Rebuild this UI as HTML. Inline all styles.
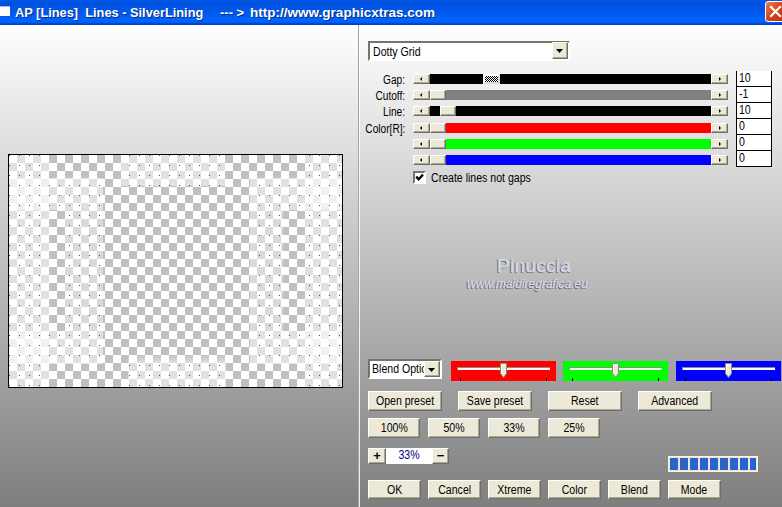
<!DOCTYPE html>
<html><head><meta charset="utf-8"><title>AP [Lines] Lines - SilverLining</title>
<style>
*{box-sizing:border-box;margin:0;padding:0}
html,body{width:782px;height:507px;overflow:hidden;background:#8a8a8a}
body{position:relative;font-family:"Liberation Sans",sans-serif;font-size:12px;color:#000;line-height:1}
.abs{position:absolute}
#title{left:0;top:0;width:782px;height:25px;background:linear-gradient(#0058ea 0,#0052de 13%,#0055e5 30%,#005af0 58%,#0066ff 80%,#0062fa 88%,#0046d4 95%,#003ac4 100%)}
#title .t{top:5.5px;color:#fff;font-weight:bold;font-size:13px;white-space:pre;text-shadow:1px 1px 0 #0a2a80}
#title .ic{left:0;top:6px;width:10px;height:10px;background:#fff;border-top:1px solid #9cc0f8}
#close{left:765px;top:1px;width:21px;height:21px;border:1px solid #fff;border-radius:3px;background:linear-gradient(135deg,#e8805c,#d2431c 50%,#b8300e)}
.pan{top:25px;height:482px;background:linear-gradient(#ffffff 0,#7e7e7e 100%)}
#left{left:0;width:358px}
#right{left:359px;width:423px}
#d1{left:358px;top:25px;width:1px;height:482px;background:#a6a49e}
#d2{left:359px;top:25px;width:1px;height:482px;background:rgba(255,255,250,.85)}
#prev{left:8px;top:154px;width:335px;height:234px;border:1px solid #000;background:#fff}
.n{display:inline-block;transform:scaleX(.88);transform-origin:0 50%;white-space:nowrap}
.lab{text-align:right;width:60px;left:345.5px;height:14px;font-size:12px}
.lab .n{transform-origin:100% 50%;transform:scaleX(.845)}
.btn{background:#ece9d8;border:1px solid;border-color:#fff #716f64 #716f64 #fff;box-shadow:inset -1px -1px 0 #aca899;text-align:center;font-size:12px}
.btn .n{transform-origin:50% 50%}
.sl{height:10px;left:413px;width:315px}
.ab{top:0;width:16px;height:10px;background:#ece9d8;border:1px solid;border-color:#fff #716f64 #716f64 #fff;box-shadow:inset -1px -1px 0 #aca899}
.th{top:0;width:16px;height:10px;background:#ece9d8;border:1px solid;border-color:#fff #716f64 #716f64 #fff;box-shadow:inset -1px -1px 0 #aca899}
.tri{position:absolute;top:1.75px;width:0;height:0;border:2.25px solid transparent}
.inp{left:736px;width:36px;height:16px;background:#fff;border:1px solid #000;border-top:0;font-size:12px;padding:1px 0 0 2px}
.sunk{background:#fff;border:2px solid;border-color:#77756b #fff #fff #77756b}
.sunk2{background:#fff;border:2px solid;border-color:#85837a #fff #fff #85837a}
</style></head><body>
<div id="title" class="abs"><div class="ic abs"></div><div class="t abs" style="left:15px;transform:scaleX(.985);transform-origin:0 0">AP [Lines]  Lines - SilverLining</div><div class="t abs" style="left:220px">--- &gt;</div><div class="t abs" style="left:250px;transform:scaleX(1.04);transform-origin:0 0">http://www.graphicxtras.com</div>
<div id="close" class="abs"><svg width="19" height="19" viewBox="0 0 19 19"><path d="M5 5 L14 14 M14 5 L5 14" stroke="#fff" stroke-width="2.2" stroke-linecap="square"/></svg></div></div>
<div id="left" class="abs pan"></div><div id="right" class="abs pan"></div><div id="d1" class="abs"></div><div id="d2" class="abs"></div>
<div id="prev" class="abs"><svg class="abs" style="left:0;top:0" width="333" height="232" viewBox="0 0 333 232" shape-rendering="crispEdges"><defs><pattern id="ck" width="16" height="16" patternUnits="userSpaceOnUse"><rect width="16" height="16" fill="#fff"/><rect x="8" width="8" height="8" fill="#c0c0c0"/><rect y="8" width="8" height="8" fill="#c0c0c0"/></pattern><pattern id="dt" width="10" height="10" patternUnits="userSpaceOnUse"><rect width="1" height="1" fill="#4a4a4a"/></pattern><clipPath id="cp"><rect x="0" y="0" width="40" height="232"/><rect x="296" y="0" width="37" height="232"/><rect x="0" y="23" width="94" height="32"/><rect x="241" y="23" width="92" height="32"/><rect x="112" y="0" width="104" height="31"/><rect x="56" y="55" width="38" height="121"/><rect x="241" y="55" width="33" height="121"/><rect x="0" y="176" width="94" height="33"/><rect x="241" y="176" width="92" height="33"/><rect x="119" y="207" width="98" height="25"/><rect x="119" y="205" width="98" height="2"/><rect x="119" y="203" width="98" height="2"/><rect x="119" y="201" width="98" height="2"/></clipPath></defs><rect width="333" height="232" fill="url(#ck)"/><rect x="0" y="0" width="40" height="232" fill="#fff" fill-opacity="0.50"/><rect x="296" y="0" width="37" height="232" fill="#fff" fill-opacity="0.50"/><rect x="0" y="23" width="94" height="32" fill="#fff" fill-opacity="0.50"/><rect x="241" y="23" width="92" height="32" fill="#fff" fill-opacity="0.50"/><rect x="112" y="0" width="104" height="31" fill="#fff" fill-opacity="0.50"/><rect x="56" y="55" width="38" height="121" fill="#fff" fill-opacity="0.42"/><rect x="241" y="55" width="33" height="121" fill="#fff" fill-opacity="0.42"/><rect x="0" y="176" width="94" height="33" fill="#fff" fill-opacity="0.50"/><rect x="241" y="176" width="92" height="33" fill="#fff" fill-opacity="0.50"/><rect x="119" y="207" width="98" height="25" fill="#fff" fill-opacity="0.50"/><rect x="119" y="205" width="98" height="2" fill="#fff" fill-opacity="0.38"/><rect x="119" y="203" width="98" height="2" fill="#fff" fill-opacity="0.25"/><rect x="119" y="201" width="98" height="2" fill="#fff" fill-opacity="0.12"/><rect width="333" height="232" fill="url(#dt)" clip-path="url(#cp)"/></svg></div>
<div class="abs sunk" style="left:368px;top:41px;width:202px;height:20px"><div class="abs" style="left:2.5px;top:3px"><span class="n">Dotty Grid</span></div><div class="abs btn" style="left:182px;top:-1px;width:16px;height:17px"><svg class="abs" style="left:3px;top:6px" width="7" height="4" viewBox="0 0 7 4"><path d="M0 0H7L3.5 4Z" fill="#000"/></svg></div></div>
<div class="abs lab" style="top:74px"><span class="n">Gap:</span></div>
<div class="abs sl" style="top:74px;background:#000"><div class="abs ab" style="left:0;width:17px"><div class="tri" style="left:5.5px;border-left-width:0;border-right:2.5px solid #000"></div></div><div class="abs" style="left:70px;top:0;width:17px;height:10px;border:2px solid;border-color:#fff #dedbca #dedbca #fff;background:repeating-conic-gradient(#000 0 25%,#fff 0 50%) 0 0/2px 2px"></div><div class="abs ab" style="left:298px;width:17px"><div class="tri" style="left:7px;border-right-width:0;border-left:2.5px solid #000"></div></div></div>
<div class="abs inp" style="top:71px"><span class="n">10</span></div>
<div class="abs lab" style="top:90px"><span class="n">Cutoff:</span></div>
<div class="abs sl" style="top:90px;background:#808080"><div class="abs ab" style="left:0;width:17px"><div class="tri" style="left:5.5px;border-left-width:0;border-right:2.5px solid #000"></div></div><div class="abs th" style="left:17px"></div><div class="abs ab" style="left:298px;width:17px"><div class="tri" style="left:7px;border-right-width:0;border-left:2.5px solid #000"></div></div></div>
<div class="abs inp" style="top:87px"><span class="n">-1</span></div>
<div class="abs lab" style="top:106px"><span class="n">Line:</span></div>
<div class="abs sl" style="top:106px;background:#000"><div class="abs ab" style="left:0;width:17px"><div class="tri" style="left:5.5px;border-left-width:0;border-right:2.5px solid #000"></div></div><div class="abs th" style="left:27px"></div><div class="abs ab" style="left:298px;width:17px"><div class="tri" style="left:7px;border-right-width:0;border-left:2.5px solid #000"></div></div></div>
<div class="abs inp" style="top:103px"><span class="n">10</span></div>
<div class="abs lab" style="top:123px"><span class="n">Color[R]:</span></div>
<div class="abs sl" style="top:123px;background:#f00"><div class="abs ab" style="left:0;width:17px"><div class="tri" style="left:5.5px;border-left-width:0;border-right:2.5px solid #000"></div></div><div class="abs th" style="left:17px"></div><div class="abs ab" style="left:298px;width:17px"><div class="tri" style="left:7px;border-right-width:0;border-left:2.5px solid #000"></div></div></div>
<div class="abs inp" style="top:119px"><span class="n">0</span></div>
<div class="abs sl" style="top:139px;background:#0f0"><div class="abs ab" style="left:0;width:17px"><div class="tri" style="left:5.5px;border-left-width:0;border-right:2.5px solid #000"></div></div><div class="abs th" style="left:17px"></div><div class="abs ab" style="left:298px;width:17px"><div class="tri" style="left:7px;border-right-width:0;border-left:2.5px solid #000"></div></div></div>
<div class="abs inp" style="top:135px"><span class="n">0</span></div>
<div class="abs sl" style="top:155px;background:#00f"><div class="abs ab" style="left:0;width:17px"><div class="tri" style="left:5.5px;border-left-width:0;border-right:2.5px solid #000"></div></div><div class="abs th" style="left:17px"></div><div class="abs ab" style="left:298px;width:17px"><div class="tri" style="left:7px;border-right-width:0;border-left:2.5px solid #000"></div></div></div>
<div class="abs inp" style="top:151px"><span class="n">0</span></div>
<div class="abs sunk" style="left:413px;top:171px;width:13px;height:13px"><svg class="abs" style="left:0;top:0" width="9" height="9" viewBox="0 0 9 9"><path d="M1.2 3.6 L3.6 6.2 L8 1.6" stroke="#000" stroke-width="2.3" fill="none"/></svg></div>
<div class="abs" style="left:431px;top:172px"><span class="n">Create lines not gaps</span></div>
<div class="abs" style="left:497px;top:256px;font-size:19px;color:#d8d8e0;letter-spacing:.3px;-webkit-text-stroke:.5px #d8d8e0;text-shadow:-1px 1px 0 #66666e,-1px 0 1px #7a7a84">Pinuccia</div>
<div class="abs" style="left:467px;top:278px;font-size:12px;font-style:italic;color:#d8d8e0;-webkit-text-stroke:.3px #d8d8e0;text-shadow:-1px 1px 0 #66666e,-1px 0 1px #7a7a84">www.maidiregrafica.eu</div>
<div class="abs sunk" style="left:368px;top:359px;width:74px;height:20px;overflow:hidden"><div class="abs" style="left:2px;top:2px"><span class="n">Blend Options</span></div><div class="abs btn" style="left:54px;top:0px;width:16px;height:16px"><svg class="abs" style="left:3px;top:6px" width="7" height="4" viewBox="0 0 7 4"><path d="M0 0H7L3.5 4Z" fill="#000"/></svg></div></div>
<div class="abs" style="left:451px;top:361px;width:105px;height:20px;background:#f00"><div class="abs" style="left:6px;top:6px;width:93px;height:3px;background:#fbfbf8;border-top:1px solid #8c8c84;border-left:1px solid #8c8c84"></div><svg class="abs" style="left:49px;top:2px" width="8" height="15" viewBox="0 0 8 15"><path d="M0.5 0.5 H6.5 V10.5 L3.5 14.5 L0.5 10.5 Z" fill="#ece9d8" stroke="#8a887c" stroke-width="1"/><path d="M1.5 10 V1.5 H6" stroke="#fff" fill="none"/></svg><div class="abs" style="left:9px;top:17px;width:1px;height:3px;background:#000"></div><div class="abs" style="left:95px;top:17px;width:1px;height:3px;background:#000"></div></div>
<div class="abs" style="left:563px;top:361px;width:105px;height:20px;background:#0f0"><div class="abs" style="left:6px;top:6px;width:93px;height:3px;background:#fbfbf8;border-top:1px solid #8c8c84;border-left:1px solid #8c8c84"></div><svg class="abs" style="left:49px;top:2px" width="8" height="15" viewBox="0 0 8 15"><path d="M0.5 0.5 H6.5 V10.5 L3.5 14.5 L0.5 10.5 Z" fill="#ece9d8" stroke="#8a887c" stroke-width="1"/><path d="M1.5 10 V1.5 H6" stroke="#fff" fill="none"/></svg><div class="abs" style="left:9px;top:17px;width:1px;height:3px;background:#000"></div><div class="abs" style="left:95px;top:17px;width:1px;height:3px;background:#000"></div></div>
<div class="abs" style="left:676px;top:361px;width:105px;height:20px;background:#00f"><div class="abs" style="left:6px;top:6px;width:93px;height:3px;background:#fbfbf8;border-top:1px solid #8c8c84;border-left:1px solid #8c8c84"></div><svg class="abs" style="left:49px;top:2px" width="8" height="15" viewBox="0 0 8 15"><path d="M0.5 0.5 H6.5 V10.5 L3.5 14.5 L0.5 10.5 Z" fill="#ece9d8" stroke="#8a887c" stroke-width="1"/><path d="M1.5 10 V1.5 H6" stroke="#fff" fill="none"/></svg><div class="abs" style="left:9px;top:17px;width:1px;height:3px;background:#000"></div><div class="abs" style="left:95px;top:17px;width:1px;height:3px;background:#000"></div></div>
<div class="abs btn" style="left:368px;top:391px;width:74px;height:20px;padding-top:3px"><span class="n">Open preset</span></div>
<div class="abs btn" style="left:458px;top:391px;width:74px;height:20px;padding-top:3px"><span class="n">Save preset</span></div>
<div class="abs btn" style="left:548px;top:391px;width:74px;height:20px;padding-top:3px"><span class="n">Reset</span></div>
<div class="abs btn" style="left:638px;top:391px;width:74px;height:20px;padding-top:3px"><span class="n">Advanced</span></div>
<div class="abs btn" style="left:368px;top:418px;width:52px;height:20px;padding-top:3px"><span class="n">100%</span></div>
<div class="abs btn" style="left:428px;top:418px;width:52px;height:20px;padding-top:3px"><span class="n">50%</span></div>
<div class="abs btn" style="left:488px;top:418px;width:52px;height:20px;padding-top:3px"><span class="n">33%</span></div>
<div class="abs btn" style="left:548px;top:418px;width:52px;height:20px;padding-top:3px"><span class="n">25%</span></div>
<div class="abs btn" style="left:368px;top:480px;width:53px;height:19px;padding-top:3px"><span class="n">OK</span></div>
<div class="abs btn" style="left:428px;top:480px;width:53px;height:19px;padding-top:3px"><span class="n">Cancel</span></div>
<div class="abs btn" style="left:488px;top:480px;width:53px;height:19px;padding-top:3px"><span class="n">Xtreme</span></div>
<div class="abs btn" style="left:548px;top:480px;width:53px;height:19px;padding-top:3px"><span class="n">Color</span></div>
<div class="abs btn" style="left:608px;top:480px;width:53px;height:19px;padding-top:3px"><span class="n">Blend</span></div>
<div class="abs btn" style="left:668px;top:480px;width:53px;height:19px;padding-top:3px"><span class="n">Mode</span></div>
<div class="abs btn" style="left:368px;top:448px;width:18px;height:16px;font-weight:bold;font-size:13px;padding-top:0">+</div>
<div class="abs" style="left:386px;top:448px;width:46px;height:16px;background:#fff;color:#000080;text-align:center;padding-top:1px"><span class="n" style="transform-origin:50% 50%">33%</span></div>
<div class="abs btn" style="left:432px;top:448px;width:17px;height:16px;font-weight:bold;font-size:13px;padding-top:0">&#8722;</div>
<div class="abs" style="left:668px;top:456px;width:90px;height:16px;background:#ece9d8;border:1px solid #f6f4ea"><div class="abs" style="left:1px;top:1px;width:8px;height:12px;background:#2c62cc"></div><div class="abs" style="left:11px;top:1px;width:8px;height:12px;background:#2c62cc"></div><div class="abs" style="left:21px;top:1px;width:8px;height:12px;background:#2c62cc"></div><div class="abs" style="left:31px;top:1px;width:8px;height:12px;background:#2c62cc"></div><div class="abs" style="left:41px;top:1px;width:8px;height:12px;background:#2c62cc"></div><div class="abs" style="left:51px;top:1px;width:8px;height:12px;background:#2c62cc"></div><div class="abs" style="left:61px;top:1px;width:8px;height:12px;background:#2c62cc"></div><div class="abs" style="left:71px;top:1px;width:8px;height:12px;background:#2c62cc"></div><div class="abs" style="left:81px;top:1px;width:6px;height:12px;background:#2c62cc"></div></div>
</body></html>
